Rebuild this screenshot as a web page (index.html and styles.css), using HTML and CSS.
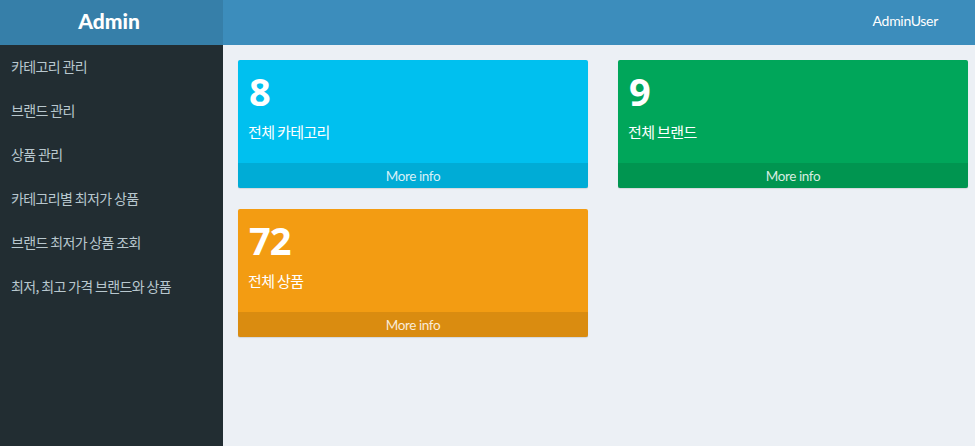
FILE: index.html
```html
<!DOCTYPE html>
<html lang="ko">
<head>
<meta charset="utf-8">
<title>Admin</title>
<link rel="stylesheet" href="styles.css">
</head>
<body>
<div class="wrapper">
  <header class="topbar">
    <div class="logo">Admin</div>
    <nav class="navbar"><span class="user">AdminUser</span></nav>
  </header>
  <div class="main">
    <aside class="sidebar">
      <ul class="menu">
        <li>카테고리 관리</li>
        <li>브랜드 관리</li>
        <li>상품 관리</li>
        <li>카테고리별 최저가 상품</li>
        <li>브랜드 최저가 상품 조회</li>
        <li>최저, 최고 가격 브랜드와 상품</li>
      </ul>
    </aside>
    <section class="content">
      <div class="grid">
        <div class="box aqua">
          <div class="inner"><h3>8</h3><p>전체 카테고리</p></div>
          <a class="footer">More info</a>
        </div>
        <div class="box green">
          <div class="inner"><h3>9</h3><p>전체 브랜드</p></div>
          <a class="footer">More info</a>
        </div>
        <div class="box yellow">
          <div class="inner"><h3>72</h3><p>전체 상품</p></div>
          <a class="footer">More info</a>
        </div>
      </div>
    </section>
  </div>
</div>
</body>
</html>
```
FILE: styles.css
```css
* { box-sizing: border-box; }
html, body { margin: 0; padding: 0; height: 100%; }
body {
  font-family: "Lato", "Noto Sans CJK KR", sans-serif;
  font-size: 14px;
  background: #ecf0f5;
  color: #333;
}
.wrapper { display: flex; flex-direction: column; height: 100%; }
.topbar { display: flex; height: 45px; flex: none; }
.logo {
  width: 223px;
  background: #367fa9;
  color: #fff;
  font-size: 21px;
  font-weight: 900;
  display: flex;
  align-items: center;
  justify-content: center;
  padding: 0 5px 5px 0;
  font-family: "Lato", "Noto Sans", sans-serif;
}
.navbar {
  flex: 1;
  background: #3c8dbc;
  display: flex;
  align-items: center;
  justify-content: flex-end;
  padding: 0 37px 4px 0;
}
.user { color: #fff; font-size: 14px; letter-spacing: -0.3px; font-family: "Lato", sans-serif; }
.main { flex: 1; display: flex; min-height: 0; }
.sidebar { width: 223px; background: #222d32; flex: none; }
.menu { list-style: none; margin: 0; padding: 0; }
.menu li {
  height: 44px;
  padding: 11px 0 0 11px;
  color: #b8c7ce;
  font-size: 14px;
  letter-spacing: -0.6px;
  word-spacing: -1px;
  font-family: "Noto Sans CJK KR", sans-serif;
}
.content { flex: 1; padding: 15px; }
.grid {
  display: grid;
  grid-template-columns: 350px 350px;
  column-gap: 30px;
  row-gap: 21px;
}
.box { border-radius: 2px; color: #fff; display: flex; flex-direction: column; box-shadow: 0 1px 1px rgba(0,0,0,0.1); }
.aqua { background: #00c0ef; }
.green { background: #00a65a; }
.yellow { background: #f39c12; }
.inner { padding: 10px; height: 103px; }
.inner h3 {
  margin: 0 0 10px 1px;
  font-size: 38px;
  font-weight: 700;
  line-height: 42px;
  font-family: "Noto Sans", sans-serif;
  letter-spacing: -1px;
}
.inner p {
  margin: 0;
  font-size: 15px;
  line-height: 20px;
  letter-spacing: -0.6px;
  word-spacing: -1px;
  font-family: "Noto Sans CJK KR", sans-serif;
}
.footer {
  display: block;
  height: 25px;
  padding-top: 1px;
  line-height: 24px;
  text-align: center;
  background: rgba(0,0,0,0.1);
  color: rgba(255,255,255,0.85);
  font-size: 13.5px;
  letter-spacing: -0.4px;
  font-family: "Lato", sans-serif;
}
```
